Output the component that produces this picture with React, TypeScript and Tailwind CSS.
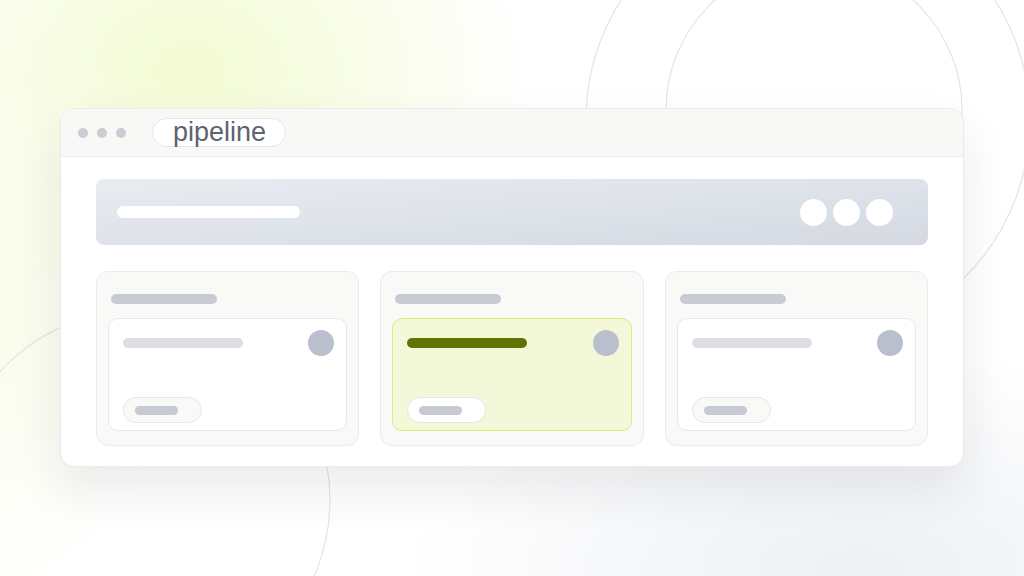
import React from "react";

function Column({ active }: { active?: boolean }) {
  return (
    <div className="flex flex-col rounded-[12px] border border-[#ebebe9] bg-[#f9f9f7] px-[11px] pb-[14px] pt-[22px]">
      <div className="ml-[3px] h-[10px] w-[106px] rounded-full bg-[#c9cbd4]" />
      <div
        className={
          active
            ? "mt-[14px] flex h-[113px] flex-col justify-between rounded-[10px] border-[1.5px] border-[#d8ed74] bg-[#f3f8d8]"
            : "mt-[14px] flex h-[113px] flex-col justify-between rounded-[10px] border border-[#e8e8e6] bg-white"
        }
      >
        <div className="flex items-start justify-between pl-[14px] pr-[12px] pt-[11px]">
          <div
            className={
              active
                ? "mt-[8px] h-[10px] w-[120px] rounded-full bg-[#5f7400]"
                : "mt-[8px] h-[10px] w-[120px] rounded-full bg-[#dcdee3]"
            }
          />
          <div className="h-[26px] w-[26px] rounded-full bg-[#b9bfcc]" />
        </div>
        <div className="mb-[7px] ml-[14px]">
          <div
            className={
              active
                ? "flex h-[26px] w-[79px] items-center rounded-full border border-[#e6e6e4] bg-white pl-[11px]"
                : "flex h-[26px] w-[79px] items-center rounded-full border border-[#e6e6e4] bg-[#f9f9f7] pl-[11px]"
            }
          >
            <div className="h-[9px] w-[43px] rounded-full bg-[#c8cad3]" />
          </div>
        </div>
      </div>
    </div>
  );
}

export default function App() {
  return (
    <div
      className="relative h-[576px] w-[1024px] overflow-hidden bg-white"
      style={{ fontFamily: '"Liberation Sans", Arial, sans-serif' }}
    >
      <div className="pointer-events-none absolute inset-0 bg-[radial-gradient(ellipse_340px_260px_at_190px_70px,#f3fbd2_0%,#f8fde6_45%,rgba(255,255,255,0)_100%)]" />
      <div className="pointer-events-none absolute inset-0 bg-[radial-gradient(ellipse_180px_300px_at_0px_300px,#f9fce9_0%,rgba(255,255,255,0)_100%)]" />
      <div className="pointer-events-none absolute inset-0 bg-[radial-gradient(ellipse_460px_220px_at_860px_570px,#eef0f3_0%,rgba(255,255,255,0)_100%)]" />
      <svg
        className="pointer-events-none absolute left-0 top-0"
        width="1024"
        height="576"
        viewBox="0 0 1024 576"
        fill="none"
      >
        <circle cx="808" cy="120" r="222" stroke="#e4e4e2" strokeWidth="1.2" />
        <circle cx="814" cy="110" r="148" stroke="#e4e4e2" strokeWidth="1.2" />
        <circle cx="140" cy="500" r="190" stroke="#e4e4e2" strokeWidth="1.2" />
      </svg>

      <div className="relative pl-[60px] pt-[108px]">
        <div className="flex h-[359px] w-[904px] flex-col overflow-hidden rounded-[14px] border border-[#ebebe9] bg-white shadow-[0_22px_48px_rgba(30,35,50,0.09)]">
          <div className="flex h-[48px] shrink-0 items-center border-b border-[#ebebe9] bg-[#f8f8f6] pl-[17px]">
            <div className="flex gap-[9px]">
              <div className="h-[10px] w-[10px] rounded-full bg-[#cbccd4]" />
              <div className="h-[10px] w-[10px] rounded-full bg-[#cbccd4]" />
              <div className="h-[10px] w-[10px] rounded-full bg-[#cbccd4]" />
            </div>
            <div className="ml-[26px] flex h-[29px] items-center rounded-full border border-[#e6e6e4] bg-white pl-[20px] pr-[19px]">
              <span className="text-[27px] leading-none text-[#5e6372]">pipeline</span>
            </div>
          </div>
          <div className="flex flex-col px-[35px] pt-[22px]">
            <div className="flex h-[66px] items-center justify-between rounded-[8px] bg-linear-to-br from-[#e9ecf1] to-[#d4d9e2] pl-[21px] pr-[35px]">
              <div className="h-[12px] w-[183px] rounded-full bg-white" />
              <div className="flex gap-[6px]">
                <div className="h-[27px] w-[27px] rounded-full bg-white" />
                <div className="h-[27px] w-[27px] rounded-full bg-white" />
                <div className="h-[27px] w-[27px] rounded-full bg-white" />
              </div>
            </div>
            <div className="mt-[26px] grid grid-cols-3 gap-[21px]">
              <Column />
              <Column active />
              <Column />
            </div>
          </div>
        </div>
      </div>
    </div>
  );
}
